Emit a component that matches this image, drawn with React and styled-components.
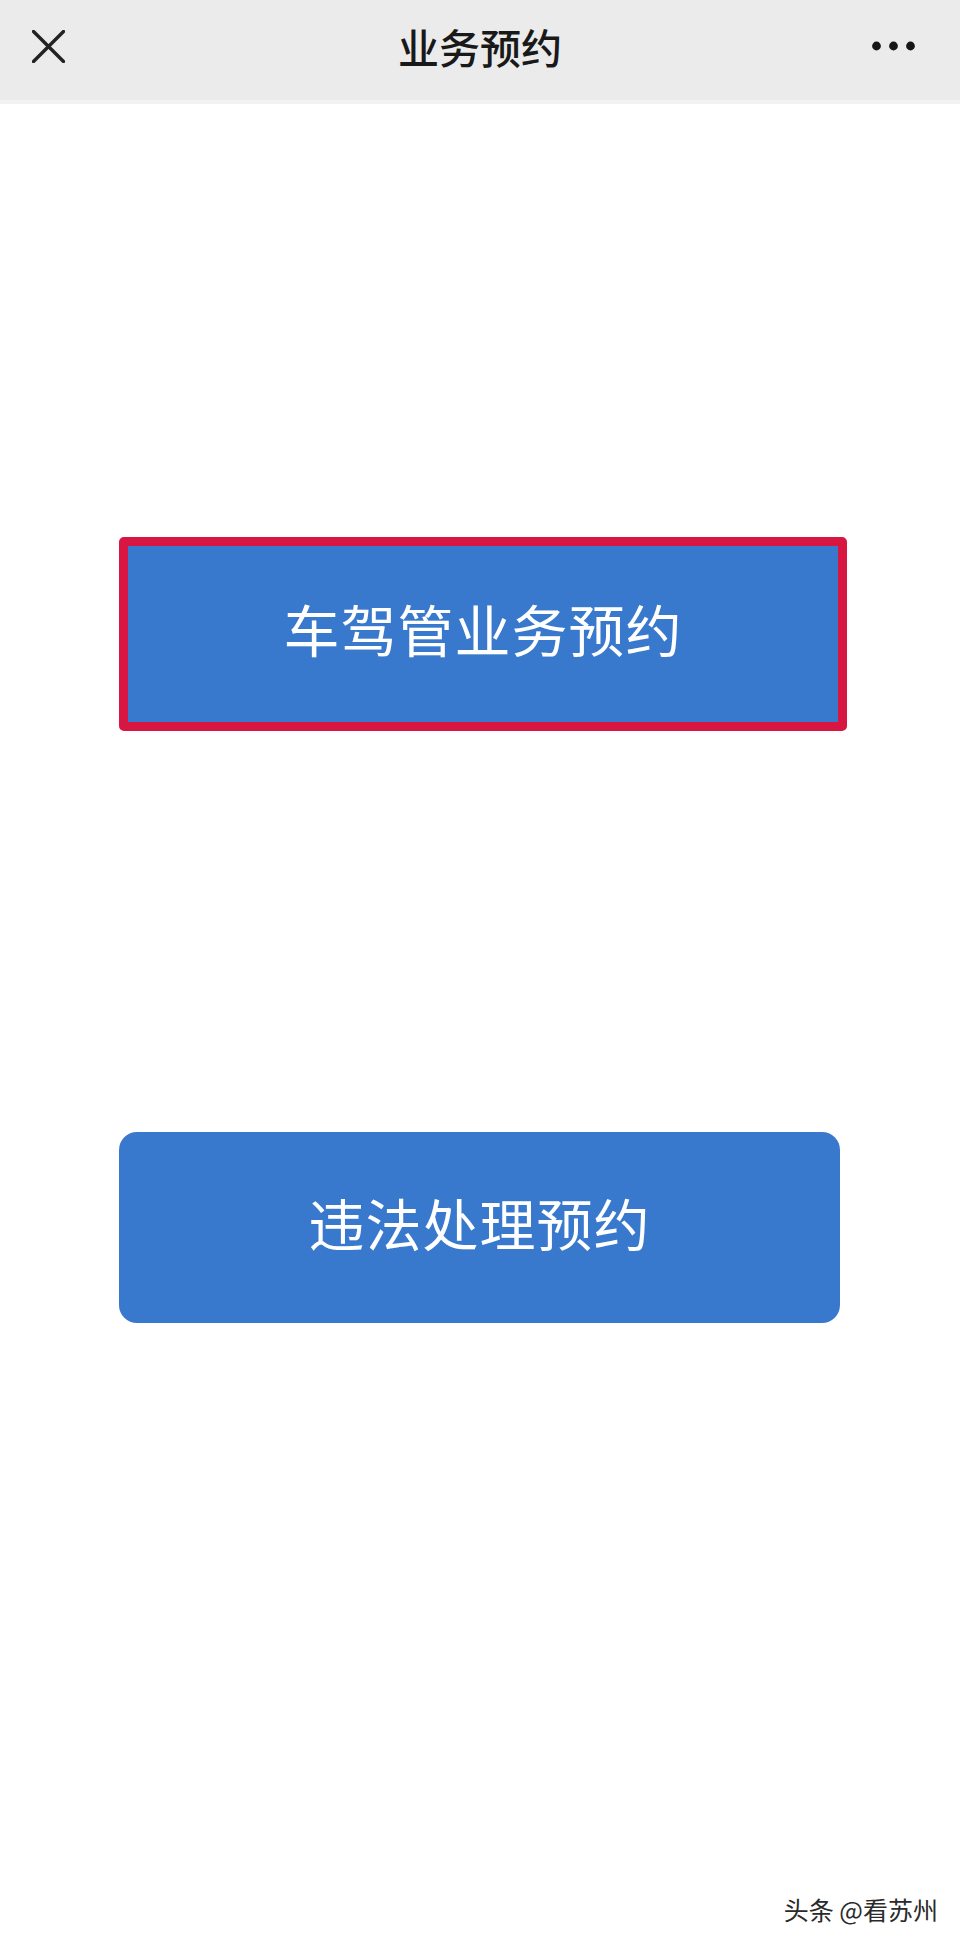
import styled, { createGlobalStyle } from "styled-components";

const GlobalStyle = createGlobalStyle`
  html, body {
    margin: 0;
    padding: 0;
    background: #ffffff;
  }
  body {
    font-family: "Noto Sans CJK SC", "Noto Sans", sans-serif;
  }
`;

const Page = styled.div`
  display: flex;
  flex-direction: column;
  width: 960px;
  min-height: 1944px;
  background: #ffffff;
`;

const TopBar = styled.header`
  display: grid;
  grid-template-columns: 1fr auto 1fr;
  align-items: center;
  height: 104px;
  padding: 0 32px 8px;
  background: #ebebeb;
  border-bottom: 4px solid #f2f2f2;
  box-sizing: border-box;
`;

const IconButton = styled.div`
  display: flex;
  align-items: center;
  justify-content: ${(p) => (p.$end ? "flex-end" : "flex-start")};
  padding-right: ${(p) => (p.$end ? "13px" : "0")};
`;

const Title = styled.h1`
  margin: 0;
  font-size: 41px;
  font-weight: 500;
  color: #191919;
  line-height: 1;
`;

const Content = styled.main`
  display: flex;
  flex-direction: column;
  align-items: flex-start;
  padding: 433px 0 0 119px;
`;

const ActionButton = styled.button`
  display: flex;
  align-items: center;
  justify-content: center;
  box-sizing: border-box;
  width: ${(p) => (p.$highlight ? "728px" : "721px")};
  height: ${(p) => (p.$highlight ? "194px" : "191px")};
  margin-top: ${(p) => p.$gap || 0}px;
  padding: 0 0 13px;
  background: #3879cd;
  border: ${(p) => (p.$highlight ? "9px solid #d71642" : "none")};
  border-radius: ${(p) => (p.$highlight ? "5px" : "18px")};
  color: #ffffff;
  font-family: "Noto Sans CJK SC", sans-serif;
  font-size: 56px;
  font-weight: 400;
  letter-spacing: 1px;
  cursor: pointer;
`;

const Footer = styled.footer`
  display: flex;
  justify-content: flex-end;
  margin-top: auto;
  padding: 0 22px 22px 0;
`;

const Watermark = styled.span`
  font-size: 25px;
  line-height: 1;
  color: #2a2a2a;
  text-shadow: 0 0 2px rgba(255, 255, 255, 0.9);
`;

function CloseIcon() {
  return (
    <svg width="33" height="33" viewBox="0 0 33 33" fill="none">
      <path
        d="M1.5 1.5 L31.5 31.5 M31.5 1.5 L1.5 31.5"
        stroke="#222"
        strokeWidth="3.4"
        strokeLinecap="round"
      />
    </svg>
  );
}

function MoreIcon() {
  return (
    <svg width="43" height="10" viewBox="0 0 43 10" fill="#161616">
      <circle cx="4.5" cy="5" r="4.4" />
      <circle cx="21.5" cy="5" r="4.4" />
      <circle cx="38.5" cy="5" r="4.4" />
    </svg>
  );
}

export default function App() {
  return (
    <>
      <GlobalStyle />
      <Page>
        <TopBar>
          <IconButton>
            <CloseIcon />
          </IconButton>
          <Title>业务预约</Title>
          <IconButton $end>
            <MoreIcon />
          </IconButton>
        </TopBar>
        <Content>
          <ActionButton $highlight>车驾管业务预约</ActionButton>
          <ActionButton $gap={401}>违法处理预约</ActionButton>
        </Content>
        <Footer>
          <Watermark>头条 @看苏州</Watermark>
        </Footer>
      </Page>
    </>
  );
}
